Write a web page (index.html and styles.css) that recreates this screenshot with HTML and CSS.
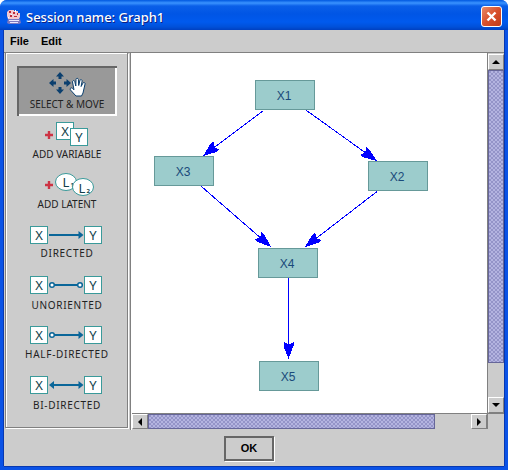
FILE: index.html
```html
<!DOCTYPE html>
<html lang="en">
<head>
    <meta charset="UTF-8">
    <title>Session name: Graph1</title>
    <link rel="stylesheet" href="styles.css">
</head>
<body>

<div class="window">
    <div class="titlebar">
        <svg class="app-icon" width="16" height="16" viewBox="0 0 16 16">
            <path d="M3 1h5v1h4v2h2v4l-1 2H2L1 7V3z" fill="#f2c8d0"/>
            <path d="M3 2h2v2H3zM7 3h2v2H7zM11 4h1v2h-1zM4 6h2v2H4zM8 7h3v1H8z" fill="#c02838"/>
            <path d="M5 5h1v1H5zM9 1h1v2H9zM2 8h1v1H2z" fill="#fff"/>
            <path d="M2 10h12l1 4-2 1H3l-2-1z" fill="#7c78c0"/>
            <path d="M3 11h10v1H3zM4 13h8v1H4z" fill="#e8e8ff"/>
        </svg>
        <span class="title">Session name: Graph1</span>
        <div class="close">
            <svg width="13" height="13" viewBox="0 0 13 13">
                <path d="M2.500 2.500l8 8M10.500 2.500l-8 8" stroke="#fff" stroke-width="2.400" fill="none"/>
            </svg>
        </div>
    </div>

    <div class="content">
        <div class="menubar">
            <span>File</span>
            <span>Edit</span>
        </div>

        <div class="main">
            <div class="toolbar">
                <div class="tool tool-active">
                    <svg class="tool-icon" width="100" height="32" viewBox="0 0 100 32">
                        <g fill="#0b3f6e">
                            <path d="M43 6l4 4.500h-2.500v2.500h-3v-2.500H39z"/>
                            <path d="M43 28l4-4.500h-2.500v-2.500h-3v2.500H39z"/>
                            <path d="M32 17l4.500-4v2.500h2.500v3h-2.500V21z"/>
                            <path d="M54 17l-4.500-4v2.500h-2.500v3h2.500V21z"/>
                        </g>
                        <path d="M59 30l-5.500-6c-1.200-1.500.8-3 2.200-1.500l1.300 1.300-1.500-7.800c-.3-1.600 2-2 2.300-.4l1 4.400.2-6.500c0-1.600 2.300-1.600 2.400 0l.3 6 1.200-5c.4-1.500 2.500-1 2.200.6l-1 5.400 1.800-3.300c.8-1.400 2.600-.6 2.100.9L66 27l-1.500 3z" fill="#fff" stroke="#0b3f6e" stroke-width="1"/>
                    </svg>
                    <span class="tool-label">SELECT &amp; MOVE</span>
                </div>

                <div class="tool">
                    <svg class="tool-icon" width="100" height="32" viewBox="0 0 100 32">
                        <path d="M28 19h8M32 15v8" stroke="#cc3344" stroke-width="2.400"/>
                        <rect class="box" x="39.500" y="6.500" width="17" height="17"/>
                        <text class="box-letter" x="48" y="20">X</text>
                        <rect class="box" x="53.500" y="12.500" width="17" height="17"/>
                        <text class="box-letter" x="62" y="26">Y</text>
                    </svg>
                    <span class="tool-label">ADD VARIABLE</span>
                </div>

                <div class="tool">
                    <svg class="tool-icon" width="100" height="32" viewBox="0 0 100 32">
                        <path d="M28 19h8M32 15v8" stroke="#cc3344" stroke-width="2.400"/>
                        <ellipse class="box" cx="49" cy="16" rx="10.500" ry="8.500"/>
                        <text class="box-letter" x="49" y="21">L</text>
                        <text class="box-sub" x="53.500" y="21">1</text>
                        <ellipse class="box" cx="66" cy="21" rx="10.500" ry="8.500"/>
                        <text class="box-letter" x="65" y="27">L</text>
                        <text class="box-sub" x="69.500" y="27">2</text>
                    </svg>
                    <span class="tool-label">ADD LATENT</span>
                </div>

                <div class="tool">
                    <svg class="tool-icon" width="100" height="32" viewBox="0 0 100 32">
                        <rect class="box" x="13.500" y="10.500" width="17" height="17"/>
                        <text class="box-letter" x="22" y="24">X</text>
                        <path class="link" d="M32 19h31"/>
                        <path class="link-head" d="M66.500 19l-5-4v8z"/>
                        <rect class="box" x="67.500" y="10.500" width="17" height="17"/>
                        <text class="box-letter" x="76" y="24">Y</text>
                    </svg>
                    <span class="tool-label wide label-up">DIRECTED</span>
                </div>

                <div class="tool">
                    <svg class="tool-icon" width="100" height="32" viewBox="0 0 100 32">
                        <rect class="box" x="13.500" y="10.500" width="17" height="17"/>
                        <text class="box-letter" x="22" y="24">X</text>
                        <path class="link" d="M37 19h24"/>
                        <circle class="link-end" cx="35" cy="19" r="2.300"/>
                        <circle class="link-end" cx="63" cy="19" r="2.300"/>
                        <rect class="box" x="67.500" y="10.500" width="17" height="17"/>
                        <text class="box-letter" x="76" y="24">Y</text>
                    </svg>
                    <span class="tool-label wide label-down">UNORIENTED</span>
                </div>

                <div class="tool">
                    <svg class="tool-icon" width="100" height="32" viewBox="0 0 100 32">
                        <rect class="box" x="13.500" y="10.500" width="17" height="17"/>
                        <text class="box-letter" x="22" y="24">X</text>
                        <path class="link" d="M37 19h26"/>
                        <circle class="link-end" cx="35" cy="19" r="2.300"/>
                        <path class="link-head" d="M66.500 19l-5-4v8z"/>
                        <rect class="box" x="67.500" y="10.500" width="17" height="17"/>
                        <text class="box-letter" x="76" y="24">Y</text>
                    </svg>
                    <span class="tool-label wide">HALF-DIRECTED</span>
                </div>

                <div class="tool">
                    <svg class="tool-icon" width="100" height="32" viewBox="0 0 100 32">
                        <rect class="box" x="13.500" y="10.500" width="17" height="17"/>
                        <text class="box-letter" x="22" y="24">X</text>
                        <path class="link" d="M36 19h27"/>
                        <path class="link-head" d="M32 19l5-4v8z"/>
                        <path class="link-head" d="M66.500 19l-5-4v8z"/>
                        <rect class="box" x="67.500" y="10.500" width="17" height="17"/>
                        <text class="box-letter" x="76" y="24">Y</text>
                    </svg>
                    <span class="tool-label wide label-down">BI-DIRECTED</span>
                </div>
            </div>

            <div class="scrollpane">
                <div class="canvas">
                    <svg class="graph" width="355" height="360" viewBox="132 53 355 360">
                        <defs>
                            <path id="head" d="M0 0L-8-3L-13-5L-17-5L-15-1L-15 1L-17 5L-13 5L-8 3Z"/>
                        </defs>
                        <g class="edges">
                            <path d="M263.500 110.500L203 156"/>
                            <path d="M306.500 110.500L377 161"/>
                            <path d="M201.500 186.500L271 247"/>
                            <path d="M377 191.500L305 247"/>
                            <path d="M288.500 278L288.500 359"/>
                        </g>
                        <g class="heads">
                            <use href="#head" transform="translate(203 156) rotate(142.500)"/>
                            <use href="#head" transform="translate(377 161) rotate(35.700)"/>
                            <use href="#head" transform="translate(271 247) rotate(41.500)"/>
                            <use href="#head" transform="translate(305 247) rotate(141.600)"/>
                            <use href="#head" transform="translate(288.500 359) rotate(90)"/>
                        </g>
                        <g class="node">
                            <rect x="255.500" y="80.500" width="59" height="29"/>
                            <text x="284" y="100">X1</text>
                        </g>
                        <g class="node">
                            <rect x="154.500" y="156.500" width="59" height="29"/>
                            <text x="183" y="176">X3</text>
                        </g>
                        <g class="node">
                            <rect x="368.500" y="161.500" width="59" height="29"/>
                            <text x="397" y="181">X2</text>
                        </g>
                        <g class="node">
                            <rect x="258.500" y="248.500" width="59" height="29"/>
                            <text x="287" y="268">X4</text>
                        </g>
                        <g class="node">
                            <rect x="259.500" y="361.500" width="59" height="29"/>
                            <text x="288" y="381">X5</text>
                        </g>
                    </svg>
                </div>

                <div class="vscroll">
                    <div class="arrow-btn"><div class="tri-up"></div></div>
                    <div class="thumb thumb-v"></div>
                    <div class="track"></div>
                    <div class="arrow-btn"><div class="tri-down"></div></div>
                </div>

                <div class="hscroll">
                    <div class="arrow-btn"><div class="tri-left"></div></div>
                    <div class="thumb thumb-h"></div>
                    <div class="track"></div>
                    <div class="arrow-btn"><div class="tri-right"></div></div>
                </div>

                <div class="corner"></div>
            </div>
        </div>

        <div class="footer">
            <button class="ok">OK</button>
        </div>
    </div>
</div>

</body>
</html>
```

FILE: styles.css
```css
* {
    margin: 0;
    padding: 0;
    box-sizing: border-box;
}

body {
    width: 508px;
    height: 470px;
    overflow: hidden;
    background: #fff;
    font-family: "Liberation Sans", Arial, sans-serif;
}

.window {
    width: 508px;
    height: 470px;
    display: flex;
    flex-direction: column;
    border-radius: 7px 7px 0 0;
    overflow: hidden;
    background: #0a52e6;
}

/* Title bar */
.titlebar {
    height: 30px;
    flex: none;
    display: flex;
    align-items: center;
    padding: 3px 6px 0 6px;
    background: linear-gradient(#0058e0 0, #3a93ff 3px, #0a5fe8 6px, #0055e5 14px, #005aee 22px, #0050d8 27px, #0040c0 30px);
}

.app-icon {
    flex: none;
    margin-right: 4px;
}

.title {
    color: #fff;
    font-family: "Noto Sans", sans-serif;
    font-size: 13px;
    font-weight: 500;
    text-shadow: 1px 1px 0 #0f1f80;
}

.close {
    width: 21px;
    height: 21px;
    margin-left: auto;
    display: flex;
    align-items: center;
    justify-content: center;
    border: 1px solid #fff;
    border-radius: 3px;
    background: linear-gradient(135deg, #e88a68, #d8502c 50%, #c23c1a);
}

/* Window body */
.content {
    flex: 1;
    display: flex;
    flex-direction: column;
    min-height: 0;
    margin: 0 4px 4px 4px;
    background: #cccccc;
    box-shadow: 1px 0 0 #0838b0, -1px 0 0 #0838b0, 0 1px 0 #0838b0;
}

.menubar {
    height: 23px;
    flex: none;
    display: flex;
    align-items: center;
    gap: 12px;
    padding-left: 6px;
    font-size: 11px;
    font-weight: bold;
    color: #000;
    border-bottom: 1px solid #808080;
}

.main {
    height: 377px;
    flex: none;
    display: flex;
}

/* Tool palette */
.toolbar {
    width: 123px;
    flex: none;
    display: flex;
    flex-direction: column;
    margin: 0 2px 2px 1px;
    padding: 13px 0 0 11px;
    border: 1px solid #808080;
    border-top: none;
    box-shadow: 1px 1px 0 #fff, inset 1px 1px 0 #fff;
}

.tool {
    width: 100px;
    height: 50px;
    flex: none;
    display: flex;
    flex-direction: column;
    align-items: center;
    color: #222;
}

.tool-active {
    background: #999999;
    box-shadow: inset 2px 2px 0 #666666, inset -2px -2px 0 #fff;
}

.tool-icon {
    display: block;
    flex: none;
}

.tool-label {
    font-family: "Noto Sans", sans-serif;
    font-size: 10px;
    line-height: 12px;
    white-space: nowrap;
}

.tool-label.wide {
    letter-spacing: .7px;
}

.label-up {
    margin-top: -1px;
}

.label-down {
    margin-top: 1px;
}

.box {
    fill: #fff;
    stroke: #3a9a9a;
    stroke-width: 1;
}

.box-letter {
    font-family: "Noto Sans", sans-serif;
    font-size: 13px;
    fill: #123f4a;
    text-anchor: middle;
}

.box-sub {
    font-family: "Noto Sans", sans-serif;
    font-size: 6px;
    font-weight: bold;
    fill: #123f4a;
}

.link {
    stroke: #0a6699;
    stroke-width: 2;
    fill: none;
}

.link-head {
    fill: #0a6699;
}

.link-end {
    fill: #fff;
    stroke: #0a6699;
    stroke-width: 1.500;
}

/* Scroll pane with the graph */
.scrollpane {
    flex: 1;
    display: grid;
    grid-template-columns: 355px 17px;
    grid-template-rows: 360px 16px;
    padding-left: 1px;
    border-left: 1px solid #808080;
    background: linear-gradient(90deg, #fff 1px, #cccccc 1px);
}

.canvas {
    background: #fff;
    overflow: hidden;
}

.graph {
    display: block;
}

.edges path {
    stroke: #0000ff;
    stroke-width: 1;
    fill: none;
    shape-rendering: crispEdges;
}

.heads use {
    fill: #0000ff;
    shape-rendering: crispEdges;
}

.node rect {
    fill: #9ccccc;
    stroke: #669999;
    stroke-width: 1;
}

.node text {
    font-family: "Liberation Sans", Arial, sans-serif;
    font-size: 12px;
    fill: #1a4a7a;
    text-anchor: middle;
}

.vscroll {
    display: flex;
    flex-direction: column;
    border-left: 1px solid #808080;
    padding-top: 1px;
}

.hscroll {
    display: flex;
    border-top: 1px solid #808080;
}

.vscroll .arrow-btn {
    width: 16px;
    height: 16px;
}

.hscroll .arrow-btn {
    width: 16px;
    height: 15px;
}

.arrow-btn {
    flex: none;
    display: flex;
    align-items: center;
    justify-content: center;
    background: #cccccc;
    border: 1px solid;
    border-color: #fff #808080 #808080 #fff;
}

.thumb {
    flex: none;
    border: 1px solid #666699;
    background: repeating-conic-gradient(#b4b4e0 0 25%, #9494c8 0 50%) 0 0 / 4px 4px;
}

.thumb-v {
    height: 293px;
}

.thumb-h {
    width: 287px;
}

.track {
    flex: 1;
    background: #cccccc;
}

.corner {
    background: #cccccc;
    border-top: 1px solid #808080;
    border-left: 1px solid #808080;
}

.tri-up, .tri-down {
    width: 0;
    height: 0;
    border-left: 4px solid transparent;
    border-right: 4px solid transparent;
}

.tri-up {
    border-bottom: 4px solid #000;
}

.tri-down {
    border-top: 4px solid #000;
}

.tri-left, .tri-right {
    width: 0;
    height: 0;
    border-top: 4px solid transparent;
    border-bottom: 4px solid transparent;
}

.tri-left {
    border-right: 4px solid #000;
}

.tri-right {
    border-left: 4px solid #000;
}

/* Footer */
.footer {
    flex: 1;
    display: flex;
    align-items: center;
    justify-content: center;
    padding-right: 10px;
}

.ok {
    width: 50px;
    height: 25px;
    font-family: "Liberation Sans", Arial, sans-serif;
    font-size: 11px;
    font-weight: bold;
    color: #000;
    background: #cccccc;
    border: 2px solid #666666;
    box-shadow: 1px 1px 0 #fff;
}
```
